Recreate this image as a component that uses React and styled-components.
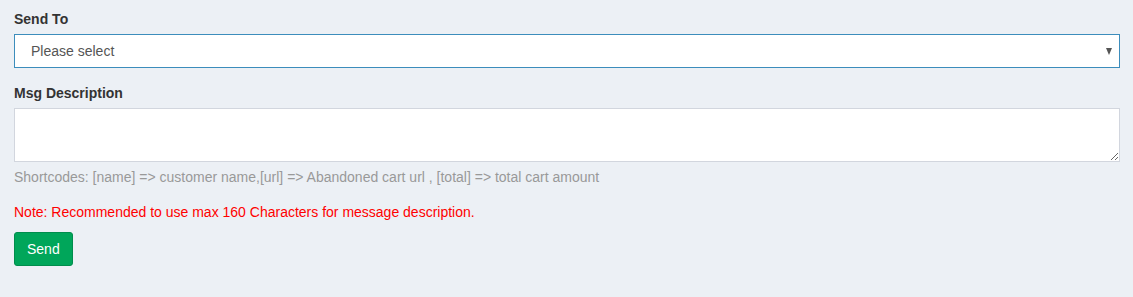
import React from "react";
import styled, { createGlobalStyle } from "styled-components";

const GlobalStyle = createGlobalStyle`
  html, body {
    margin: 0;
    padding: 0;
    background: #ecf0f5;
  }
  body {
    font-family: "Liberation Sans", Arial, sans-serif;
    font-size: 14px;
    line-height: 20px;
    color: #333;
  }
  * {
    box-sizing: border-box;
  }
`;

const Page = styled.div`
  padding: 9px 13px 20px 14px;
`;

const FormGroup = styled.div`
  margin-bottom: ${props => props.gap ?? 15}px;
`;

const Label = styled.label`
  display: block;
  font-weight: bold;
  margin-bottom: 5px;
  color: #333;
`;

const SelectWrap = styled.div`
  position: relative;
`;

const Select = styled.select`
  display: block;
  width: 100%;
  height: 34px;
  padding: 0 30px 0 16px;
  font-family: inherit;
  font-size: 14px;
  color: #555;
  background: #fff;
  border: 1px solid #3c8dbc;
  border-radius: 0;
  appearance: none;
  outline: none;
`;

const Caret = styled.span`
  position: absolute;
  right: 8px;
  top: 14px;
  width: 0;
  height: 0;
  border-left: 3.5px solid transparent;
  border-right: 3.5px solid transparent;
  border-top: 7px solid #555;
  pointer-events: none;
`;

const TextArea = styled.textarea`
  display: block;
  width: 100%;
  height: 54px;
  padding: 6px 12px;
  font-family: inherit;
  font-size: 14px;
  color: #555;
  background: #fff;
  border: 1px solid #d2d6de;
  border-radius: 0;
  outline: none;
`;

const HelpText = styled.p`
  margin: 5px 0 0;
  color: #999;
`;

const Note = styled.p`
  margin: 15px 0 10px;
  color: #ff0000;
`;

const Actions = styled.div`
  display: flex;
`;

const Button = styled.button`
  height: 34px;
  padding: 6px 12px;
  font-family: inherit;
  font-size: 14px;
  line-height: 20px;
  color: #fff;
  background: #00a65a;
  border: 1px solid #008d4c;
  border-radius: 3px;
  cursor: pointer;
`;

const App = () => (
  <>
    <GlobalStyle />
    <Page>
      <FormGroup>
        <Label>Send To</Label>
        <SelectWrap>
          <Select defaultValue="">
            <option value="">Please select</option>
          </Select>
          <Caret />
        </SelectWrap>
      </FormGroup>
      <FormGroup gap={0}>
        <Label>Msg Description</Label>
        <TextArea />
        <HelpText>
          Shortcodes: [name] =&gt; customer name,[url] =&gt; Abandoned cart url ,
          [total] =&gt; total cart amount
        </HelpText>
      </FormGroup>
      <Note>Note: Recommended to use max 160 Characters for message description.</Note>
      <Actions>
        <Button>Send</Button>
      </Actions>
    </Page>
  </>
);

export default App;
